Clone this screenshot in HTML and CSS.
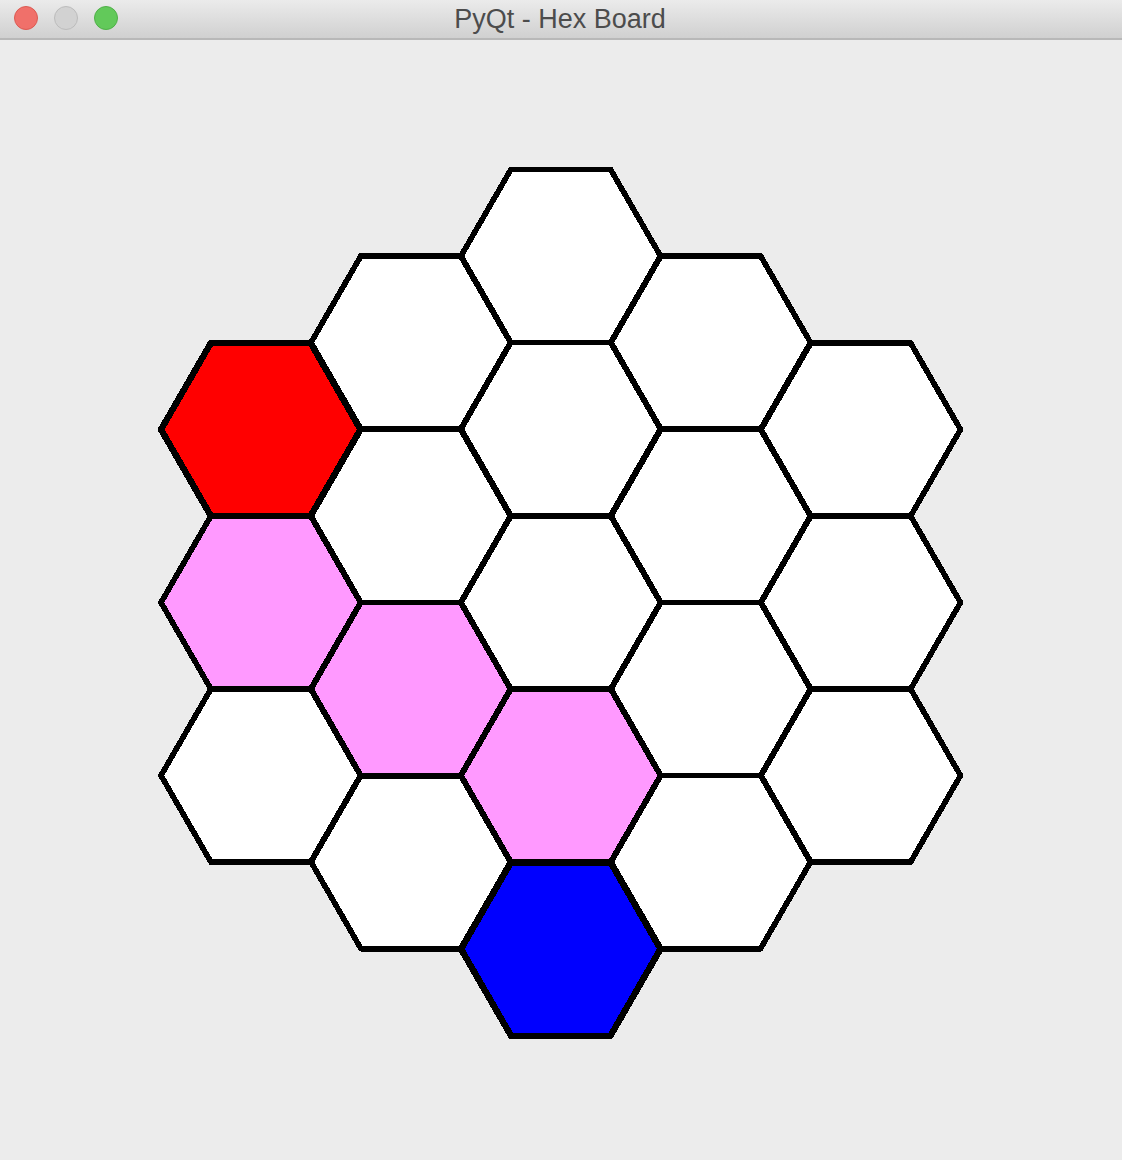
FILE: index.html
```html
<!DOCTYPE html>
<html lang="en">
  <head>
    <meta charset="UTF-8" />
    <meta name="viewport" content="width=device-width, initial-scale=1.0" />
    <title>PyQt - Hex Board</title>
    <link rel="stylesheet" href="styles.css">
  </head>
  <body>
    <div class="window">
      <header class="titlebar">
        <div class="lights">
          <span class="light close"></span>
          <span class="light minimize"></span>
          <span class="light zoom"></span>
        </div>
        <h1 class="title">PyQt - Hex Board</h1>
      </header>
      <main class="content">
        <svg class="board" width="1122" height="1120" viewBox="0 40 1122 1120">
          <defs>
            <polygon id="hex" points="-100,0 -50,-86.7 49.5,-86.7 99.5,0 49.5,86.7 -50,86.7" />
          </defs>
          <!-- empty cells -->
          <g class="cells">
            <use href="#hex" x="261" y="775.5" />
            <use href="#hex" x="411" y="342.5" />
            <use href="#hex" x="411" y="516" />
            <use href="#hex" x="411" y="862" />
            <use href="#hex" x="561" y="256" />
            <use href="#hex" x="561" y="429" />
            <use href="#hex" x="561" y="602.5" />
            <use href="#hex" x="711" y="342.5" />
            <use href="#hex" x="711" y="516" />
            <use href="#hex" x="711" y="689" />
            <use href="#hex" x="711" y="862" />
            <use href="#hex" x="861" y="429.5" />
            <use href="#hex" x="861" y="602.5" />
            <use href="#hex" x="861" y="775.5" />
          </g>
          <!-- winning path -->
          <g class="cells path">
            <use href="#hex" x="261" y="602.5" />
            <use href="#hex" x="411" y="689" />
            <use href="#hex" x="561" y="775.5" />
          </g>
          <!-- end points -->
          <g class="cells red">
            <use href="#hex" x="261" y="429.5" />
          </g>
          <g class="cells blue">
            <use href="#hex" x="561" y="949" />
          </g>
        </svg>
      </main>
    </div>
  </body>
</html>
```

FILE: styles.css
```css
html,
body {
  margin: 0;
  padding: 0;
}
body {
  width: 1122px;
  height: 1160px;
  overflow: hidden;
  background-color: #ececec;
}
.window {
  display: flex;
  flex-direction: column;
  height: 1160px;
}
.titlebar {
  position: relative;
  display: flex;
  align-items: center;
  justify-content: center;
  flex: 0 0 38px;
  border-bottom: 2px solid #b8b8b8;
  background: linear-gradient(#ebebeb, #d0d0d0);
}
.lights {
  position: absolute;
  left: 14px;
  top: 6px;
  display: flex;
  gap: 16px;
}
.light {
  box-sizing: border-box;
  width: 24px;
  height: 24px;
  border-radius: 50%;
  border: 1px solid;
}
.close {
  background-color: #f0706a;
  border-color: #dc5a52;
}
.minimize {
  background-color: #d2d2d2;
  border-color: #bcbcbc;
}
.zoom {
  background-color: #62c95a;
  border-color: #4fb048;
}
.title {
  margin: 0 2px 0 0;
  font-family: "Liberation Sans", sans-serif;
  font-size: 27px;
  font-weight: normal;
  color: #4c4c4c;
}
.content {
  flex: 1;
}
.board {
  display: block;
}
.cells use {
  fill: #ffffff;
  stroke: #000000;
  stroke-width: 5.6;
  stroke-linejoin: round;
  shape-rendering: crispEdges;
}
.path use {
  fill: #ff99ff;
}
.red use {
  fill: #ff0000;
  stroke-width: 6.4;
}
.blue use {
  fill: #0000ff;
  stroke-width: 6.4;
}
```
